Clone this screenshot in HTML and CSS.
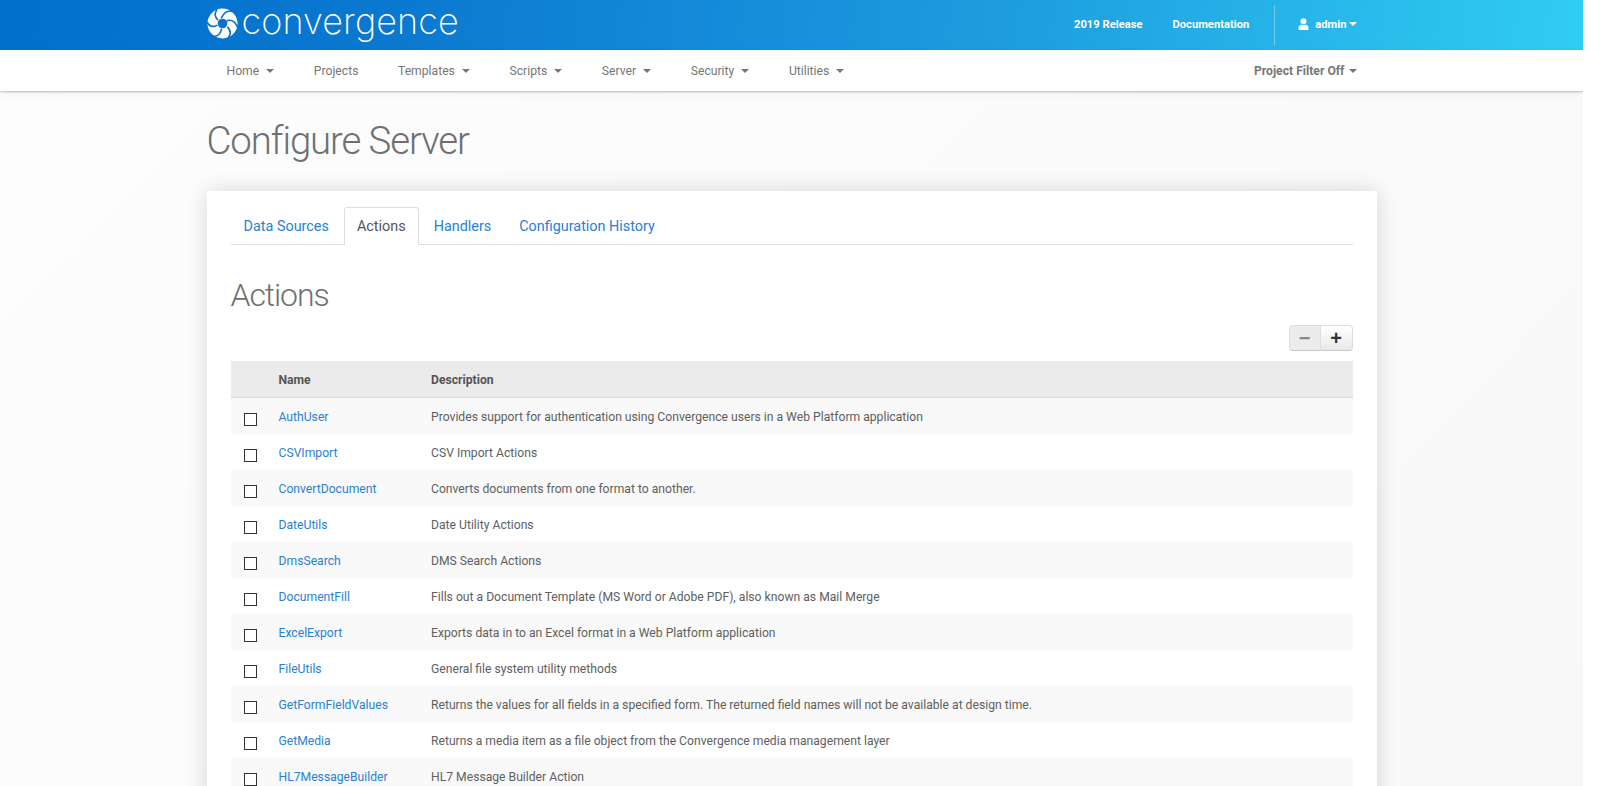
FILE: index.html
```html
<!DOCTYPE html>
<html lang="en">
<head>
  <meta charset="UTF-8">
  <meta name="viewport" content="width=device-width, initial-scale=1.0">
  <title>Configure Server</title>
  <link rel="stylesheet" href="styles.css">
</head>

<body>
  <div class="page">
  <header class="topbar">
    <div class="wrap topbar-inner">
      <a class="brand" href="#">
        <svg class="brand-mark" viewBox="0 0 32 32" width="31" height="31" aria-hidden="true">
          <circle cx="16" cy="16" r="15.500" fill="#fff"/>
          <g fill="none" stroke="#0a72cc" stroke-width="1.700" stroke-linecap="round">
            <path d="M15 10C17 6 21 2 26 3.500"/>
            <path d="M21 13C25 12 29 14 31 19"/>
            <path d="M21.500 20C24 23 25 27 22 30.500"/>
            <path d="M15 22C14 26 11 30 6.500 29"/>
            <path d="M10 18C6 20 2 19 .5 15"/>
            <path d="M11 12C8 9 8 5 10 2"/>
          </g>
          <circle cx="16" cy="16" r="5" fill="#0a72cc"/>
        </svg>
        <span class="brand-name">convergence</span>
      </a>
      <nav class="top-links">
        <a href="#">2019 Release</a>
        <a href="#">Documentation</a>
        <span class="top-sep"></span>
        <a class="user" href="#">
          <svg viewBox="0 0 12 13" width="11" height="12" aria-hidden="true"><circle cx="6" cy="3.400" r="3.200" fill="#fff"/><path d="M.6 13V10.400C.6 8.400 2.200 7.200 4 7.200h4c1.800 0 3.400 1.200 3.400 3.200V13z" fill="#fff"/></svg>
          admin <i class="caret"></i>
        </a>
      </nav>
    </div>
  </header>

  <nav class="menubar">
    <div class="wrap menu-inner">
      <ul class="menu">
        <li><a href="#">Home <i class="caret"></i></a></li>
        <li><a href="#">Projects</a></li>
        <li><a href="#">Templates <i class="caret"></i></a></li>
        <li><a href="#">Scripts <i class="caret"></i></a></li>
        <li><a href="#">Server <i class="caret"></i></a></li>
        <li><a href="#">Security <i class="caret"></i></a></li>
        <li><a href="#">Utilities <i class="caret"></i></a></li>
      </ul>
      <a class="filter" href="#">Project Filter Off <i class="caret"></i></a>
    </div>
  </nav>

  <main class="wrap">
    <h1>Configure Server</h1>

    <section class="card">
      <ul class="tabs">
        <li><a href="#">Data Sources</a></li>
        <li class="active"><a href="#">Actions</a></li>
        <li><a href="#">Handlers</a></li>
        <li><a href="#">Configuration History</a></li>
      </ul>

      <h2>Actions</h2>

      <div class="toolbar">
        <div class="btn-group">
          <button class="btn off" type="button">&minus;</button>
          <button class="btn" type="button">+</button>
        </div>
      </div>

      <table class="grid">
        <thead>
          <tr><th class="col-check"></th><th class="col-name">Name</th><th>Description</th></tr>
        </thead>
        <tbody>
          <tr><td><input type="checkbox"></td><td><a href="#">AuthUser</a></td><td>Provides support for authentication using Convergence users in a Web Platform application</td></tr>
          <tr><td><input type="checkbox"></td><td><a href="#">CSVImport</a></td><td>CSV Import Actions</td></tr>
          <tr><td><input type="checkbox"></td><td><a href="#">ConvertDocument</a></td><td>Converts documents from one format to another.</td></tr>
          <tr><td><input type="checkbox"></td><td><a href="#">DateUtils</a></td><td>Date Utility Actions</td></tr>
          <tr><td><input type="checkbox"></td><td><a href="#">DmsSearch</a></td><td>DMS Search Actions</td></tr>
          <tr><td><input type="checkbox"></td><td><a href="#">DocumentFill</a></td><td>Fills out a Document Template (MS Word or Adobe PDF), also known as Mail Merge</td></tr>
          <tr><td><input type="checkbox"></td><td><a href="#">ExcelExport</a></td><td>Exports data in to an Excel format in a Web Platform application</td></tr>
          <tr><td><input type="checkbox"></td><td><a href="#">FileUtils</a></td><td>General file system utility methods</td></tr>
          <tr><td><input type="checkbox"></td><td><a href="#">GetFormFieldValues</a></td><td>Returns the values for all fields in a specified form. The returned field names will not be available at design time.</td></tr>
          <tr><td><input type="checkbox"></td><td><a href="#">GetMedia</a></td><td>Returns a media item as a file object from the Convergence media management layer</td></tr>
          <tr><td><input type="checkbox"></td><td><a href="#">HL7MessageBuilder</a></td><td>HL7 Message Builder Action</td></tr>
        </tbody>
      </table>
    </section>
  </main>
  </div>
</body>
</html>
```

FILE: styles.css
```css
html,body{
  height:100%;
  overflow:hidden;
}

body{
  margin:0;
  background:#fff;
  color:#606060;
  font-family:Roboto,"Liberation Sans",sans-serif;
  font-size:12.16px;
}

a{
  color:#2a7fd2;
  text-decoration:none;
}

ul{
  list-style:none;
  margin:0;
  padding:0;
}

.page{
  width:1583px;
  height:100%;
  background:linear-gradient(135deg,#fdfdfd,#f8f8f8);
  overflow:hidden;
}

.wrap{
  width:1170px;
  margin:0 auto;
  box-sizing:border-box;
}

.caret{
  display:inline-block;
  width:0;
  height:0;
  margin-left:4px;
  vertical-align:2px;
  border-top:4px solid currentColor;
  border-left:4px solid transparent;
  border-right:4px solid transparent;
}

/* top bar */
.topbar{
  height:50px;
  background:linear-gradient(100deg,#0070cc 0%,#0b78d0 25%,#1e9fe0 65%,#30cdf3 100%);
}

.topbar-inner{
  display:flex;
  justify-content:space-between;
  align-items:center;
  height:50px;
}

.brand{
  display:flex;
  align-items:center;
  gap:4px;
  color:#fff;
  margin-top:-3px;
}

.brand-name{
  margin-bottom:6px;
  font-family:Inter,Roboto,sans-serif;
  font-weight:200;
  font-size:36px;
  line-height:50px;
  letter-spacing:.1px;
}

.top-links{
  display:flex;
  align-items:center;
  height:40px;
  margin-right:20px;
  font-size:11.200px;
  font-weight:700;
}

.top-links a{
  color:#fff;
  margin-left:30px;
  margin-bottom:2px;
}

.top-sep{
  width:1px;
  height:40px;
  margin-left:25px;
  background:rgba(255,255,255,.35);
}

.top-links .user{
  display:flex;
  align-items:center;
  gap:6px;
  margin-left:23px;
}

.top-links .user .caret{
  margin-left:-4px;
  vertical-align:0;
  border-width:4px 4px 0;
}

/* second row */
.menubar{
  height:41px;
  background:#fff;
  box-shadow:0 1px 2px rgba(0,0,0,.25),0 3px 10px rgba(0,0,0,.04);
  position:relative;
}

.menu-inner{
  display:flex;
  justify-content:space-between;
  align-items:center;
  height:41px;
}

.menu{
  display:flex;
  gap:39.600px;
  padding-left:20px;
}

.menu a,.filter{
  color:#777;
  font-size:12.160px;
}

.filter{
  font-weight:700;
  margin-right:20px;
}

.filter .caret{
  margin-left:1px;
}

/* content */
h1{
  margin:0;
  padding-top:27px;
  height:100px;
  box-sizing:border-box;
  font-size:38.400px;
  font-weight:300;
  line-height:46px;
  color:#707070;
  letter-spacing:-1.100px;
}

.card{
  padding:16px 24px 0;
  box-sizing:border-box;
  background:#fff;
  box-shadow:0 0 20px rgba(0,0,0,.15);
  min-height:620px;
}

.tabs{
  display:flex;
  height:37px;
  border-bottom:1px solid #ddd;
  font-size:14.400px;
}

.tabs li{
  height:37px;
  box-sizing:border-box;
  padding:0 12px;
  margin-right:2px;
  line-height:38px;
  border:1px solid transparent;
  border-bottom:0;
}

.tabs .active{
  height:38px;
  border-color:#ddd;
  border-radius:3px 3px 0 0;
  background:#fff;
}

.tabs .active a{
  color:#555;
}

h2{
  margin:0;
  padding-top:31px;
  height:80px;
  box-sizing:border-box;
  font-size:32px;
  font-weight:300;
  line-height:38px;
  color:#707070;
  letter-spacing:-1.100px;
}

.toolbar{
  display:flex;
  justify-content:flex-end;
  height:36px;
}

.btn-group{
  display:flex;
  height:26px;
}

.btn{
  width:33px;
  height:26px;
  padding:0;
  border:1px solid #ddd;
  border-bottom-color:#c8c8c8;
  border-radius:0 4px 4px 0;
  background:linear-gradient(#fff,#e9e9e9);
  color:#333;
  font-family:"Liberation Sans",sans-serif;
  font-size:20px;
  font-weight:700;
  line-height:20px;
}

.btn.off{
  width:31px;
  border-right:0;
  border-radius:4px 0 0 4px;
  background:#ececec;
  color:#888;
}

.grid{
  width:100%;
  border-collapse:collapse;
  table-layout:fixed;
}

.grid th{
  height:34px;
  padding:2px 0 0;
  background:#ebebeb;
  border-bottom:1px solid #ddd;
  text-align:left;
  font-weight:700;
  color:#555;
}

.col-check{
  width:48px;
}

.col-name{
  width:152.500px;
}

.grid td{
  height:34px;
  padding:2px 0 0;
}

.grid tbody tr:nth-child(odd){
  background:#f9f9f9;
}

.grid input{
  display:block;
  appearance:none;
  width:13px;
  height:13px;
  margin:5px 0 0 13px;
  border:1px solid #333;
  background:#fff;
}
```
